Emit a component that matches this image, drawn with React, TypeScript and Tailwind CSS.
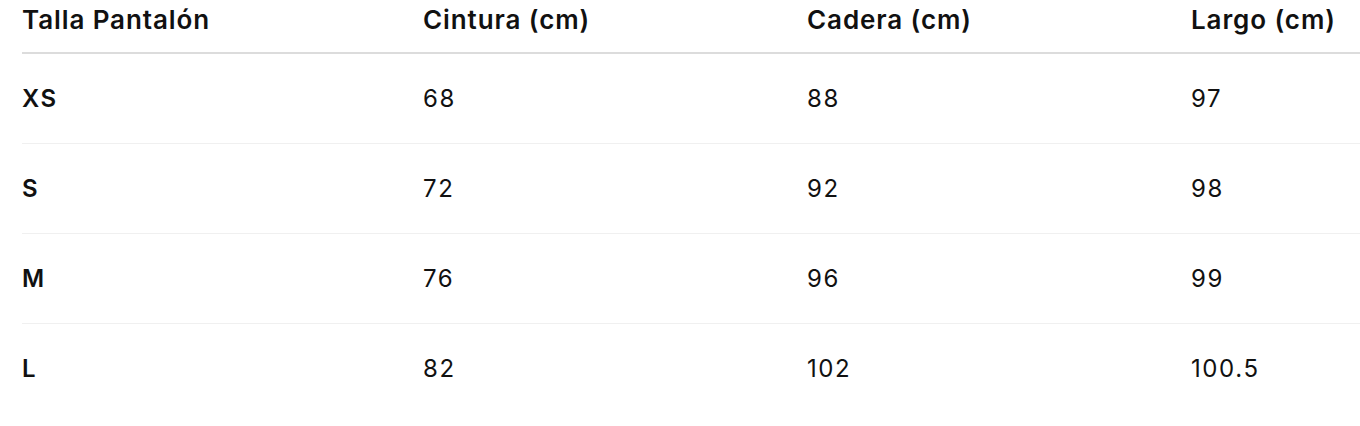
import React from "react";

const rows = [
  { size: "XS", waist: "68", hip: "88", length: "97" },
  { size: "S", waist: "72", hip: "92", length: "98" },
  { size: "M", waist: "76", hip: "96", length: "99" },
  { size: "L", waist: "82", hip: "102", length: "100.5" },
];

export default function App() {
  return (
    <div
      className="w-[1360px] h-[426px] overflow-hidden bg-white pl-[22px] text-[#111]"
      style={{ fontFamily: "Inter, 'Noto Sans', sans-serif" }}
    >
      <table className="w-[1338px] border-collapse table-fixed leading-none">
        <colgroup>
          <col className="w-[401px]" />
          <col className="w-[384px]" />
          <col className="w-[384px]" />
          <col />
        </colgroup>
        <thead>
          <tr className="h-[53px] border-b-2 border-[#dcdcdc] text-[26px] tracking-[0.9px]">
            <th className="p-0 pb-[12px] text-left font-semibold">Talla Pantalón</th>
            <th className="p-0 pb-[12px] text-left font-semibold">Cintura (cm)</th>
            <th className="p-0 pb-[12px] text-left font-semibold">Cadera (cm)</th>
            <th className="p-0 pb-[12px] text-left font-semibold whitespace-nowrap">Largo (cm)</th>
          </tr>
        </thead>
        <tbody className="text-[24px] tracking-[1.6px]">
          {rows.map((r, i) => (
            <tr
              key={r.size}
              className={`h-[90px] ${i < rows.length - 1 ? "border-b border-[#f0f0f0]" : ""}`}
            >
              <td className="p-0 pt-[1px] font-semibold tracking-[1.4px]">{r.size}</td>
              <td className="p-0 pt-[1px] font-normal">{r.waist}</td>
              <td className="p-0 pt-[1px] font-normal">{r.hip}</td>
              <td className="p-0 pt-[1px] font-normal">{r.length}</td>
            </tr>
          ))}
        </tbody>
      </table>
    </div>
  );
}
